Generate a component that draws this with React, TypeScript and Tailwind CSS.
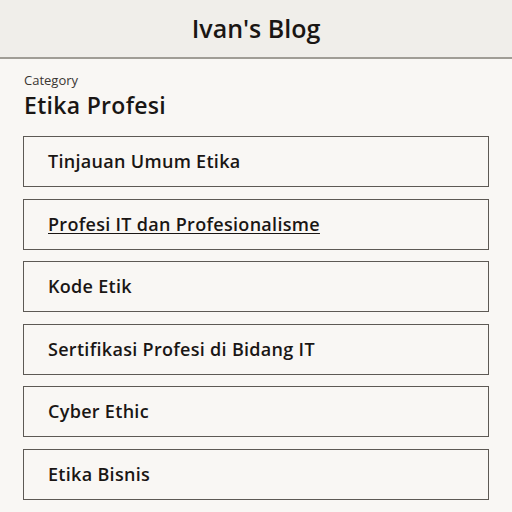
import React from "react";

const items = [
  "Tinjauan Umum Etika",
  "Profesi IT dan Profesionalisme",
  "Kode Etik",
  "Sertifikasi Profesi di Bidang IT",
  "Cyber Ethic",
  "Etika Bisnis",
  "",
];

export default function App() {
  return (
    <div className="h-screen overflow-hidden bg-[#f9f7f4] text-[#1a1614]" style={{ fontFamily: '"Open Sans", sans-serif' }}>
      <header className="h-[59px] bg-[#f0eeea] border-b-2 border-[#a09d96] flex items-center justify-center">
        <h1 className="text-[25px] font-semibold leading-none">Ivan's Blog</h1>
      </header>
      <main className="px-[23px] pt-[13px]">
        <p className="text-[13px] leading-[16px] text-[#3a3532] pl-px">Category</p>
        <h2 className="text-[23px] font-semibold tracking-[0.3px] leading-[30px] mt-[2px] pl-px">Etika Profesi</h2>
        <ul className="mt-[16px] flex flex-col gap-[11.6px]">
          {items.map((t, i) => (
            <li key={i} className="h-[51px] shrink-0 border border-[#5d5954] flex items-center px-[24px]">
              <span className={"text-[18px] font-semibold tracking-[0.3px] " + (i === 1 ? "underline underline-offset-2" : "")}>{t}</span>
            </li>
          ))}
        </ul>
      </main>
    </div>
  );
}
